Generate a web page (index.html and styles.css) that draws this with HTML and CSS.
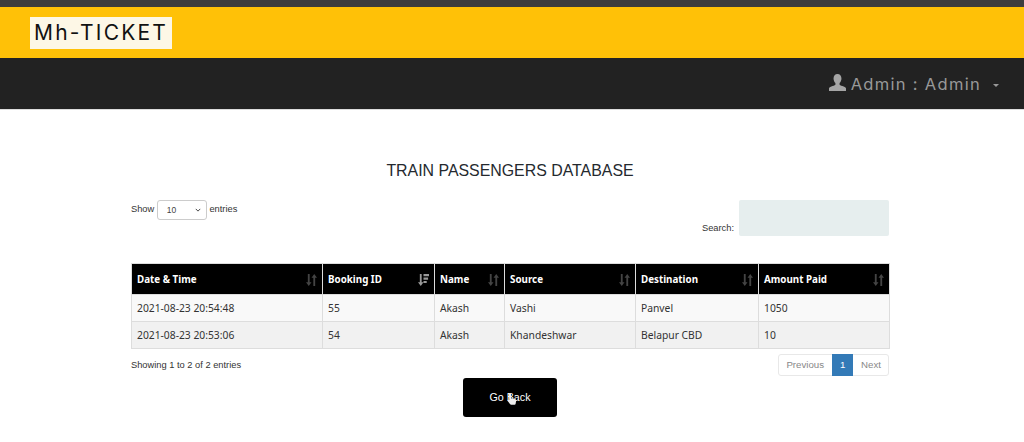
FILE: index.html
```html
<!DOCTYPE html>
<html lang="en">
<head>
    <meta charset="UTF-8">
    <title>Train Passengers Database</title>
    <link rel="stylesheet" href="styles.css">
</head>
<body>
    <svg class="icon-defs" width="0" height="0">
        <symbol id="sort-both" viewBox="0 0 12 13">
            <path d="M2 0h2v9h2l-3 4-3-4h2zM8 13h2V4h2L9 0 6 4h2z"/>
        </symbol>
        <symbol id="sort-desc" viewBox="0 0 12 13">
            <path d="M2 0h2v9h2l-3 4-3-4h2zM6 0h6v2.500H6zM6 3.800h5v2.400H6zM6 7.500h3.500v2.400H6z"/>
        </symbol>
    </svg>

    <div class="top-strip"></div>
    <header class="brand-bar">
        <div class="logo">Mh-TICKET</div>
    </header>
    <nav class="nav-bar">
        <svg class="user-icon" viewBox="0 0 18 18" width="17" height="17">
            <path d="M9 0c2.600 0 4.200 2 4.200 4.800 0 2-.8 3.800-2 4.800v1.500c0 .6 1.200 1 3 1.700 2 .8 3.300 1.400 3.800 2.400V18H0v-2.800c.5-1 1.800-1.600 3.800-2.400 1.800-.7 3-1.100 3-1.700V9.600c-1.200-1-2-2.800-2-4.800C4.800 2 6.400 0 9 0z"/>
        </svg>
        <span class="nav-user">Admin : Admin</span>
        <span class="caret"></span>
    </nav>

    <main class="content">
        <h1 class="title">TRAIN PASSENGERS DATABASE</h1>

        <div class="table-controls">
            <label class="length-label">Show
                <span class="select-wrap">
                    <select class="length-select">
                        <option>10</option>
                    </select>
                    <svg class="select-arrow" viewBox="0 0 8 5" width="6" height="4">
                        <path d="M1 1l3 3 3-3"/>
                    </svg>
                </span>
                entries</label>
            <label class="search-label">Search:
                <input type="search" class="search-input">
            </label>
        </div>

        <table class="data-table">
            <thead>
                <tr>
                    <th class="col-date">Date &amp; Time<svg class="sort"><use href="#sort-both"/></svg></th>
                    <th class="col-id">Booking ID<svg class="sort sort-active"><use href="#sort-desc"/></svg></th>
                    <th class="col-name">Name<svg class="sort"><use href="#sort-both"/></svg></th>
                    <th class="col-source">Source<svg class="sort"><use href="#sort-both"/></svg></th>
                    <th class="col-dest">Destination<svg class="sort"><use href="#sort-both"/></svg></th>
                    <th class="col-amount">Amount Paid<svg class="sort"><use href="#sort-both"/></svg></th>
                </tr>
            </thead>
            <tbody>
                <tr class="odd">
                    <td>2021-08-23 20:54:48</td>
                    <td>55</td>
                    <td>Akash</td>
                    <td>Vashi</td>
                    <td>Panvel</td>
                    <td>1050</td>
                </tr>
                <tr class="even">
                    <td>2021-08-23 20:53:06</td>
                    <td>54</td>
                    <td>Akash</td>
                    <td>Khandeshwar</td>
                    <td>Belapur CBD</td>
                    <td>10</td>
                </tr>
            </tbody>
        </table>

        <div class="table-footer">
            <div class="table-info">Showing 1 to 2 of 2 entries</div>
            <div class="pagination">
                <a class="page-link page-prev">Previous</a>
                <a class="page-link current">1</a>
                <a class="page-link page-next">Next</a>
            </div>
        </div>

        <div class="back-row">
            <button class="back-button">Go Back
                <svg class="cursor" viewBox="0 0 12 16" width="10" height="14">
                    <path d="M3.500 1c.8 0 1.300.6 1.300 1.400V7l5 1.300c.9.3 1.200.9 1.200 1.700l-.7 4c-.1.600-.6 1-1.200 1H5c-.5 0-.9-.2-1.200-.6L1 10.800c-.5-.7-.3-1.400.2-1.700.5-.3 1.100-.2 1.500.2l-.5-6.900C2.200 1.600 2.700 1 3.500 1z"/>
                </svg>
            </button>
        </div>
    </main>
</body>
</html>
```

FILE: styles.css
```css
* {
    box-sizing: border-box;
}

body {
    margin: 0;
    font-family: "Liberation Sans", Arial, sans-serif;
    font-size: 9.300px;
    color: #333;
    background: #fff;
}

.icon-defs {
    position: absolute;
}

.top-strip {
    height: 7px;
    background: #3d3d3d;
}

.brand-bar {
    height: 51px;
    padding: 10px 30px;
    background: #ffc107;
}

.logo {
    width: 142px;
    height: 32px;
    padding-left: 4px;
    background: #fdf7e6;
    color: #111;
    font-family: Inter, sans-serif;
    font-size: 21px;
    line-height: 32px;
    letter-spacing: 2.200px;
    white-space: nowrap;
}

.nav-bar {
    display: flex;
    align-items: center;
    justify-content: flex-end;
    height: 52px;
    padding-right: 25px;
    background: #222;
    color: #999;
    border-bottom: 1px solid #ddd;
}

.user-icon {
    fill: #a5a5a5;
    margin-right: 5px;
    margin-bottom: 3px;
}

.nav-user {
    font-family: Inter, sans-serif;
    font-size: 16.500px;
    letter-spacing: 1.300px;
}

.caret {
    width: 0;
    height: 0;
    margin-left: 12px;
    margin-top: 3px;
    border-top: 3px solid #999;
    border-left: 3px solid transparent;
    border-right: 3px solid transparent;
}

.content {
    padding: 0 135px 0 131px;
}

.title {
    margin: 0;
    padding-top: 51px;
    font-size: 15.900px;
    font-weight: 400;
    line-height: 20px;
    text-align: center;
    color: #24292e;
}

.table-controls {
    display: flex;
    justify-content: space-between;
    align-items: flex-start;
    height: 63px;
    margin-top: 19px;
}

.select-wrap {
    position: relative;
    display: inline-block;
    vertical-align: middle;
}

.length-select {
    display: block;
    width: 50px;
    height: 20px;
    padding: 0 0 0 9px;
    border: 1px solid #ccc;
    border-radius: 3px;
    background: #fff;
    font-family: inherit;
    font-size: 8.500px;
    color: #444;
    appearance: none;
}

.select-arrow {
    position: absolute;
    right: 6px;
    top: 8px;
    fill: none;
    stroke: #444;
    stroke-width: 1.300;
}

.search-label {
    display: flex;
    align-items: flex-end;
    gap: 5px;
    line-height: 16px;
}

.search-input {
    width: 150px;
    height: 36px;
    border: 0;
    border-radius: 2px;
    background: #e6eeee;
}

.data-table {
    width: 758px;
    border-collapse: collapse;
    table-layout: fixed;
    font-family: "Noto Sans", sans-serif;
    font-size: 10.300px;
}

.data-table th,
.data-table td {
    border: 1px solid #ddd;
    padding: 0 5px;
    text-align: left;
    white-space: nowrap;
}

.data-table th {
    position: relative;
    height: 31px;
    background: #000;
    color: #fff;
    font-size: 9.800px;
    font-weight: 700;
}

.data-table td {
    height: 27px;
    color: #333;
}

.odd td {
    background: #f9f9f9;
}

.even td {
    background: #f1f1f1;
}

.col-date {
    width: 191px;
}

.col-id {
    width: 112px;
}

.col-name {
    width: 70px;
}

.col-source {
    width: 131px;
}

.col-dest {
    width: 123px;
}

.col-amount {
    width: 131px;
}

.sort {
    position: absolute;
    right: 5px;
    top: 10px;
    width: 11px;
    height: 12px;
    fill: #444;
}

.sort-active {
    fill: #999;
}

.table-footer {
    display: flex;
    justify-content: space-between;
    align-items: flex-start;
    margin-top: 5px;
}

.table-info {
    padding-top: 6px;
    color: #333;
}

.pagination {
    display: flex;
    height: 22px;
    border: 1px solid #e8e8e8;
    border-radius: 3px;
    line-height: 20px;
    font-size: 9.700px;
    color: #888;
}

.page-link {
    padding: 0 8px;
}

.page-prev {
    padding-left: 7px;
}

.page-next {
    padding-right: 7px;
}

.page-link.current {
    width: 21px;
    height: 22px;
    margin: -1px 0;
    padding: 0;
    line-height: 22px;
    text-align: center;
    background: #337ab7;
    color: #fff;
}

.back-row {
    display: flex;
    margin-top: 2px;
    padding-left: 332px;
}

.back-button {
    position: relative;
    width: 94px;
    height: 39px;
    padding-bottom: 3px;
    border: 0;
    border-radius: 3px;
    background: #000;
    color: #fff;
    font-family: inherit;
    font-size: 10.700px;
}

.cursor {
    position: absolute;
    left: 44px;
    top: 14px;
    fill: #eee;
}
```
